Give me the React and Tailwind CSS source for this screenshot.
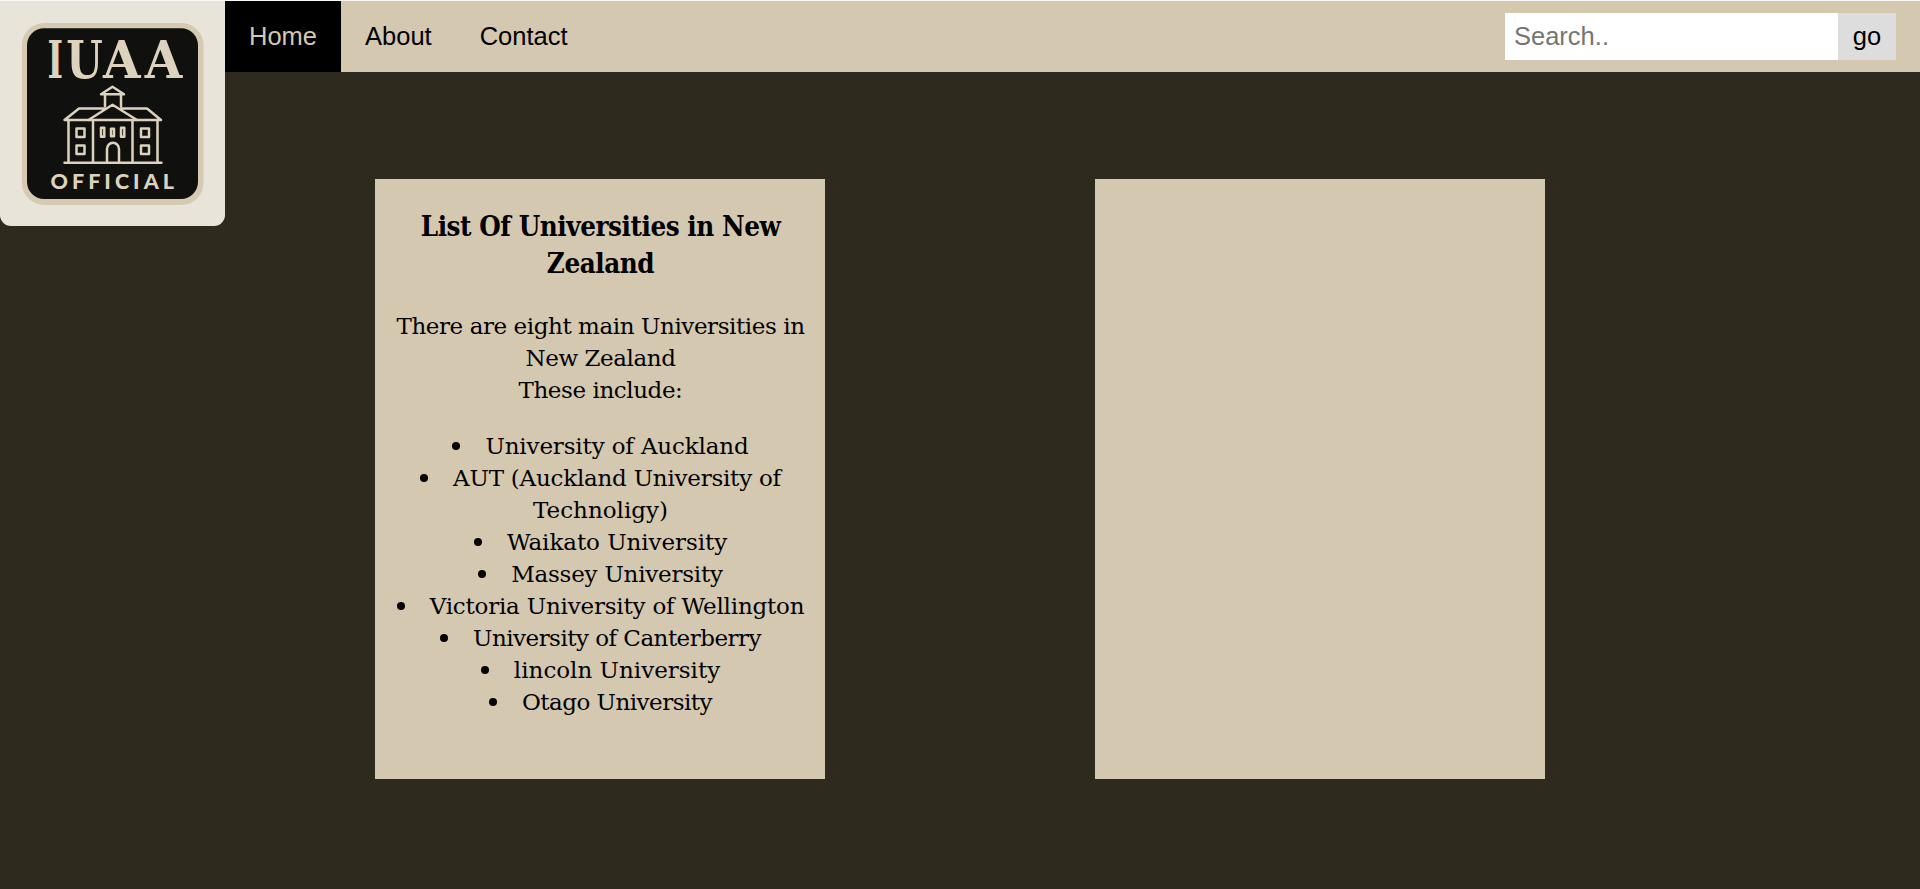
import React from "react";

function Logo() {
  return (
    <svg viewBox="0 1 225 225" className="block h-[225px] w-[225px] rounded-b-[11px] bg-[#e8e4da]">
      <rect x="22" y="23" width="181.5" height="182" rx="22" fill="#d6cab2" />
      <rect x="27" y="28.3" width="171" height="170.7" rx="17" fill="#10110f" />
      <g fill="#ddd2bd" fontFamily="'DejaVu Serif Condensed','DejaVu Serif',serif" fontWeight="700" fontSize="51.5">
        <text x="47.6" y="78.4" textLength="15.5" lengthAdjust="spacingAndGlyphs">I</text>
        <text x="66.3" y="78.4" textLength="36.500" lengthAdjust="spacingAndGlyphs">U</text>
        <text x="103" y="78.4" textLength="37.500" lengthAdjust="spacingAndGlyphs">A</text>
        <text x="144.7" y="78.4" textLength="37.500" lengthAdjust="spacingAndGlyphs">A</text>
      </g>
      <g transform="translate(0 -0.5)" fill="none" stroke="#ddd2bd" strokeWidth="2.5" strokeLinecap="round" strokeLinejoin="round">
        <path d="M101 94.8 112.5 87.3 124 94.8ZM105 95V107M121 95V107" />
        <path d="M104 109H79L64.5 120.500H88.500L112.500 105.300 137 120.500H161L147 109H121" />
        <path d="M88.500 120.500H137M68.500 120.500V162.800M157.500 120.500V162.800M93 120.500V162.800M132.500 120.500V162.800M64.500 163.300H161.500" />
        <path d="M107 162.500V149.800a6 6.500 0 0 1 12 0V162.500" />
        <path d="M76.500 129h8v8.500h-8zM76.500 146h8v8.500h-8zM141 129h8v8.500h-8zM141 146h8v8.500h-8z" />
        <path d="M101 128.300h3.300v9h-3.300zM111 129.300h3v7.500h-3zM121 128.300h3.300v9h-3.300z" />
      </g>
      <text x="50.5" y="188.700" fill="#ddd2bd" fontFamily="Lato, sans-serif" fontWeight="900" fontSize="21.5" textLength="123.500">OFFICIAL</text>
    </svg>
  );
}

const universities = [
  { lines: ["University of Auckland"], tracking: "tracking-[-0.15px]" },
  { lines: ["AUT (Auckland University of", "Technoligy)"], tracking: "tracking-[-0.23px]" },
  { lines: ["Waikato University"], tracking: "tracking-[-0.06px]" },
  { lines: ["Massey University"], tracking: "tracking-[-0.22px]" },
  { lines: ["Victoria University of Wellington"], tracking: "tracking-[-0.2px]" },
  { lines: ["University of Canterberry"], tracking: "tracking-[-0.52px]" },
  { lines: ["lincoln University"], tracking: "tracking-[0px]" },
  { lines: ["Otago University"], tracking: "tracking-[-0.52px]" },
];

function NavLink({ active, children }) {
  return (
    <a
      href="#"
      className={
        active
          ? "flex items-center bg-black px-6 text-[#d5c8b0]"
          : "flex items-center px-6 text-black"
      }
    >
      {children}
    </a>
  );
}

export default function App() {
  return (
    <div className="h-[889px] overflow-hidden border-t border-[#fbf9f6] bg-[#2e2a1d] text-black">
      <header className="flex h-[71px] items-start bg-[#d5c8b0] font-['Liberation_Sans',Arial,sans-serif] text-[25.5px]">
        <a href="#" className="relative z-10 shrink-0"><Logo /></a>
        <nav className="flex h-full">
          <NavLink active>Home</NavLink>
          <NavLink>About</NavLink>
          <NavLink>Contact</NavLink>
        </nav>
        <form className="ml-auto mr-6 mt-3 flex h-[47px]">
          <input
            type="text"
            placeholder="Search.."
            className="w-[333px] bg-white pl-[9px] outline-none placeholder:text-[#757575]"
          />
          <button type="button" className="w-[58px] bg-[#dddddd]">go</button>
        </form>
      </header>
      <main className="flex gap-[270px] pl-[375px] pt-[107px]">
        <section className="h-[600px] w-[450px] bg-[#d5c8b0] pt-[28.5px] pl-px text-center font-['DejaVu_Serif',serif] text-[23px] leading-8 whitespace-nowrap">
          <h2 className="font-['DejaVu_Serif_Condensed','DejaVu_Serif',serif] text-[27.5px] leading-[37px] font-bold tracking-[-0.45px]">
            List Of Universities in New
            <br />
            Zealand
          </h2>
          <p className="mt-7 tracking-[-0.42px]">
            There are eight main Universities in
            <br />
            New Zealand
            <br />
            These include:
          </p>
          <ul className="mt-6">
            {universities.map(({ lines, tracking }) => (
              <li key={lines[0]} className={tracking}>
                <div className="flex items-center justify-center">
                  <span className="mr-[25px] size-2 shrink-0 rounded-full bg-black" />
                  {lines[0]}
                </div>
                {lines[1] && <div className="tracking-[0px]">{lines[1]}</div>}
              </li>
            ))}
          </ul>
        </section>
        <section className="h-[600px] w-[450px] bg-[#d5c8b0]" />
      </main>
    </div>
  );
}
